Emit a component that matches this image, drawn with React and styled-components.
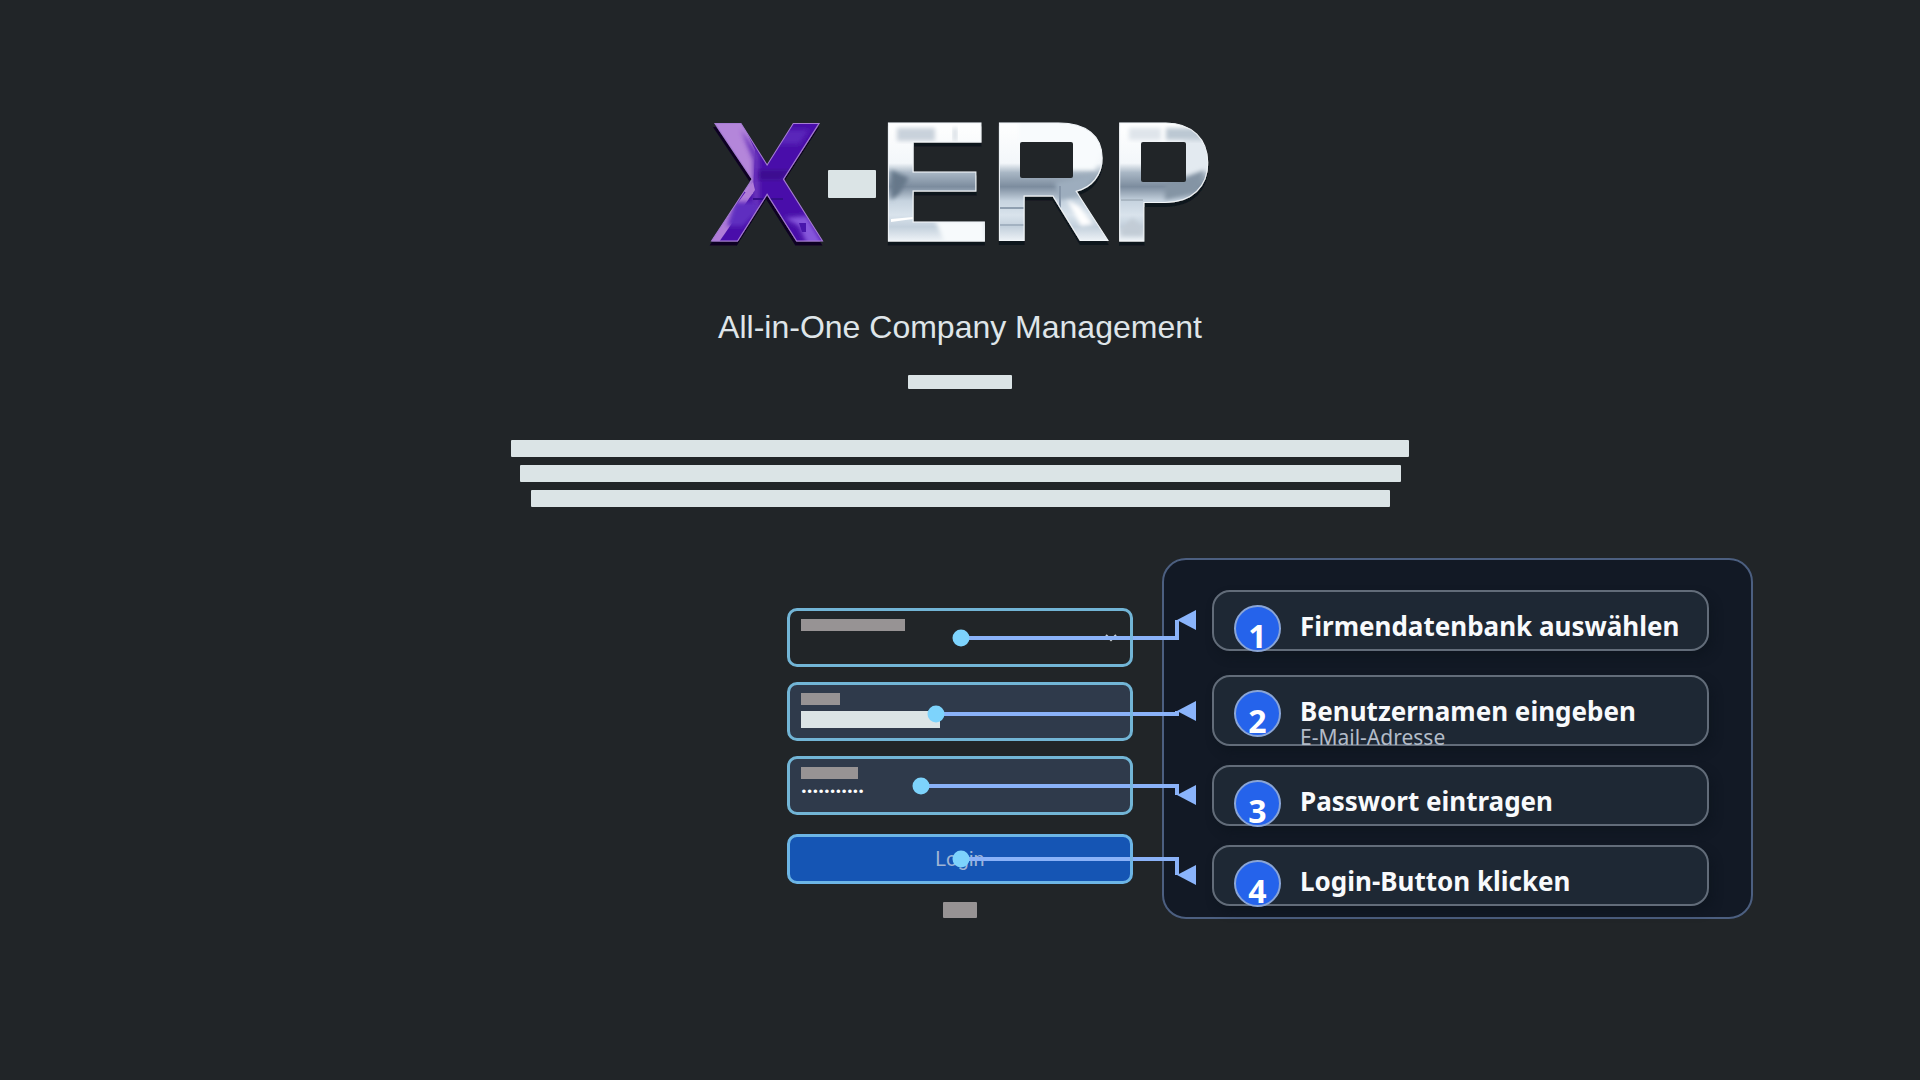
import React from "react";
import styled, { createGlobalStyle } from "styled-components";

const GlobalStyle = createGlobalStyle`
  *, *::before, *::after { box-sizing: border-box; }
  body {
    margin: 0;
    background: #212528;
    color: #dfe5e9;
    font-family: "Liberation Sans", Arial, sans-serif;
  }
`;

const Page = styled.main`
  min-height: 100vh;
  padding: 120px 0 40px;
  background: #212528;
`;

const Intro = styled.header`
  display: flex;
  flex-direction: column;
  align-items: center;
`;

const LogoHeading = styled.h1`
  margin: 0;
  line-height: 0;
`;

const LogoSvg = styled.svg`
  overflow: visible;
`;

const LogoLetter = styled.text`
  font-family: ${(p) => (p.$narrow ? "Inter" : '"Liberation Sans", Arial')}, sans-serif;
  font-size: ${(p) => (p.$narrow ? 162 : 171)}px;
  font-weight: 700;
`;

const Tagline = styled.p`
  margin: 59px 0 0;
  font-size: 32px;
  line-height: 40px;
  color: #dfe5e9;
`;

const Bar = styled.span`
  display: block;
  width: ${(p) => p.$width}px;
  max-width: 100%;
  height: ${(p) => p.$height}px;
  border-radius: 1px;
  background: ${(p) => (p.$muted ? "#979394" : "#dbe4e6")};
`;

const Version = styled.div`
  margin-top: 28px;
`;

const Description = styled.div`
  display: flex;
  flex-direction: column;
  align-items: center;
  gap: 8px;
  margin-top: 51px;
`;

const Stage = styled.section`
  display: grid;
  grid-template-columns: 1fr 346px 1fr;
  align-items: start;
  margin-top: 51px;
`;

const FormColumn = styled.div`
  position: relative;
  z-index: 1;
  grid-column: 2;
  padding-top: 50px;
`;

const Form = styled.form`
  display: flex;
  flex-direction: column;
  align-items: stretch;
  gap: 15px;
`;

const Field = styled.div`
  display: flex;
  flex-direction: column;
  align-items: flex-start;
  gap: 6px;
  height: 59px;
  padding: 8px 11px;
  border: 3px solid #72b5d6;
  border-radius: 10px;
  background: ${(p) => (p.$filled ? "#2f3a4b" : "transparent")};
`;

const FieldLabel = styled.label`
  display: block;
  width: ${(p) => p.$width}px;
  height: 12px;
  flex-shrink: 0;
  background: #979394;
`;

const SelectRow = styled.div`
  display: flex;
  align-items: center;
  align-self: stretch;
  height: 12px;
  margin-top: -5px;
  padding-right: 2px;
`;

const Select = styled.select`
  flex: 1;
  height: 12px;
  padding: 0;
  border: 0;
  outline: 0;
  appearance: none;
  background: transparent;
  color: #dfe5e9;
`;

const UserInput = styled.input`
  width: 139px;
  height: 17px;
  padding: 0;
  border: 0;
  outline: 0;
  background: #dbe4e6;
`;

const PasswordInput = styled.input`
  width: 100%;
  height: 12px;
  padding: 0;
  border: 0;
  outline: 0;
  background: transparent;
  color: #ffffff;
  font-family: Roboto, sans-serif;
  font-size: 17px;
  line-height: 12px;
`;

const LoginButton = styled.button`
  height: 50px;
  margin-top: 4px;
  padding: 0;
  border: 3px solid #6cb5e6;
  border-radius: 10px;
  background: #1555b4;
  color: #9fb4d4;
  font-family: Roboto, sans-serif;
  font-size: 20px;
`;

const FormFooter = styled.div`
  display: flex;
  justify-content: center;
  margin-top: 18px;
`;

const Connectors = styled.svg`
  position: absolute;
  top: 0;
  left: 0;
  overflow: visible;
  pointer-events: none;
`;

const Panel = styled.ol`
  grid-column: 3;
  display: flex;
  flex-direction: column;
  gap: 19px;
  width: 75%;
  min-width: 591px;
  margin: 0 0 0 29px;
  padding: 30px 42px 11px 48px;
  border: 2px solid #4c5f80;
  border-radius: 24px;
  background: #121925;
  list-style: none;
`;

const Step = styled.li`
  display: flex;
  align-items: flex-start;
  gap: 19px;
  height: ${(p) => (p.$tall ? 71 : 61)}px;
  margin-top: ${(p) => (p.$tall ? 5 : 0)}px;
  padding: 13px 20px 0;
  border: 2px solid #626c79;
  border-radius: 18px;
  background: #1e2834;
  box-shadow: 4px 6px 10px rgba(12, 20, 28, 0.5);
`;

const StepNumber = styled.span`
  display: flex;
  flex-shrink: 0;
  justify-content: center;
  width: 47px;
  height: 47px;
  padding-top: 7px;
  border: 2px solid #8aa5d6;
  border-radius: 50%;
  background: #2563eb;
  color: #ffffff;
  font-family: "Noto Sans", sans-serif;
  font-size: 32px;
  font-weight: 700;
  line-height: 44px;
`;

const StepText = styled.div`
  display: flex;
  flex-direction: column;
  padding-top: 3px;
  font-family: "Noto Sans", sans-serif;
  white-space: nowrap;
`;

const StepTitle = styled.span`
  font-size: 26px;
  font-weight: 700;
  line-height: 36px;
  color: #f8fafc;
`;

const StepNote = styled.span`
  font-size: 21px;
  line-height: 16px;
  color: #b3bcc8;
`;

/* Each letter is one text filled with its own painted surface. */
function Surface({ id, base, children }) {
  return (
    <pattern id={id} patternUnits="userSpaceOnUse" x="-10" y="-10" width="540" height="150" viewBox="-10 -10 540 150">
      <rect x="-10" y="-10" width="540" height="150" fill={base} />
      {children}
    </pattern>
  );
}

function Logo() {
  return (
    <LogoSvg width="502" height="128" viewBox="0 0 502 128" role="img" aria-label="X-ERP">
      <defs>
        <linearGradient id="chrome" gradientUnits="userSpaceOnUse" x1="0" y1="3" x2="0" y2="121">
          <stop offset="0" stopColor="#ffffff" />
          <stop offset="0.34" stopColor="#f3f7fa" />
          <stop offset="0.42" stopColor="#a9b7c5" />
          <stop offset="0.54" stopColor="#7c8c9e" />
          <stop offset="0.66" stopColor="#c6d3df" />
          <stop offset="0.78" stopColor="#d9e3ec" />
          <stop offset="0.88" stopColor="#c3d0dc" />
          <stop offset="1" stopColor="#eef3f7" />
        </linearGradient>
        <filter id="soft" x="-20%" y="-20%" width="140%" height="140%">
          <feGaussianBlur stdDeviation="2" />
        </filter>
        <filter id="violetEdge" x="-10%" y="-10%" width="120%" height="120%">
          <feDropShadow dx="-1" dy="4" stdDeviation="0.4" floodColor="#0b0620" floodOpacity="1" />
        </filter>
        <filter id="chromeEdge" x="-10%" y="-10%" width="120%" height="120%">
          <feDropShadow dx="0" dy="4" stdDeviation="0.6" floodColor="#0e141a" floodOpacity="1" />
        </filter>

        <Surface id="fillX" base="#4a11aa">
          <path d="M0 0H32L46 30L44 74L20 68Z" fill="#b486da" />
          <path d="M32 10L50 34V98L44 98V40Z" fill="#6c34bc" filter="url(#soft)" />
          <path d="M0 122L44 62L46 70L10 122Z" fill="#b07cd8" />
          <path d="M50 50H84L72 60H50Z" fill="#3c0b90" filter="url(#soft)" />
          <path d="M72 10H100L90 24H68Z" fill="#5a28ba" filter="url(#soft)" />
          <path d="M26 82H48V92L34 106H18Z" fill="#5f2ec0" filter="url(#soft)" />
          <path d="M44 78H74V80H44Z" fill="#34088a" />
          <path d="M76 98L98 96L114 124H98L90 106Z" fill="#8656dc" filter="url(#soft)" />
          <path d="M90 103H97V112H93Z" fill="#4a14ac" />
        </Surface>
        <Surface id="fillE" base="url(#chrome)">
          <path d="M188 8H226V21H188Z" fill="#c9d2db" filter="url(#soft)" />
          <path d="M244 8H248V21H244Z" fill="#d3dae1" filter="url(#soft)" />
          <path d="M182 50L200 58L190 74L182 80Z" fill="#66788a" filter="url(#soft)" />
          <path d="M182 99L204 97V99L182 102Z" fill="#ffffff" />
          <path d="M226 100H276V124H236Z" fill="#f7fafc" filter="url(#soft)" />
        </Surface>
        <Surface id="fillR" base="url(#chrome)">
          <path d="M310 0H376L392 30L386 50H360V24H310Z" fill="#f8fbfd" filter="url(#soft)" />
          <path d="M346 62L386 54L376 74L350 80Z" fill="#9dadbe" filter="url(#soft)" />
          <path d="M358 80L370 86L384 104L372 106Z" fill="#ffffff" filter="url(#soft)" />
          <path d="M291 87H316V89H291Z" fill="#8f9fb0" />
          <path d="M291 104H316V106H291Z" fill="#a3b2c1" />
          <path d="M350 66H352V92H350Z" fill="#8797aa" />
        </Surface>
        <Surface id="fillP" base="url(#chrome)">
          <path d="M456 22L504 14V50L474 62V20Z" fill="#e3eaf0" filter="url(#soft)" />
          <path d="M457 8H488L498 20H457Z" fill="#bcc8d3" filter="url(#soft)" />
          <path d="M420 8H452V20H420Z" fill="#dfe5eb" filter="url(#soft)" />
          <path d="M456 64L496 50L488 72L456 80Z" fill="#8494a4" filter="url(#soft)" />
          <path d="M412 79H434V81H412Z" fill="#a9b6c2" />
          <path d="M412 108L424 98L434 108V116H412Z" fill="#c2ccd6" filter="url(#soft)" />
        </Surface>
      </defs>

      <LogoLetter x="1" y="121" fill="url(#fillX)" stroke="#a67cd4" filter="url(#violetEdge)">
        X
      </LogoLetter>
      <rect x="119" y="50" width="48" height="28" rx="1" fill="#dbe4e6" />
      <LogoLetter x="168" y="121" fill="url(#fillE)" stroke="#f1f5f8" filter="url(#chromeEdge)">
        E
      </LogoLetter>
      <LogoLetter x="279" y="121" fill="url(#fillR)" stroke="#f1f5f8" filter="url(#chromeEdge)">
        R
      </LogoLetter>
      <LogoLetter x="400" y="121" $narrow fill="url(#fillP)" stroke="#f1f5f8" filter="url(#chromeEdge)">
        P
      </LogoLetter>
      <rect x="309" y="18" width="66" height="44" fill="url(#fillR)" />
      <rect x="430" y="18" width="54" height="46" fill="url(#fillP)" />
      <rect x="311" y="22" width="53" height="36" rx="2" fill="#212528" />
      <rect x="432" y="22" width="45" height="40" rx="2" fill="#212528" />
    </LogoSvg>
  );
}

/* Coordinates start at the top left corner of the form column. */
const LINKS = [
  { x: 174, y: 80, tip: 62 },
  { x: 149, y: 156, tip: 153 },
  { x: 134, y: 228, tip: 237 },
  { x: 174, y: 301, tip: 317 },
];

const STEPS = [
  { title: "Firmendatenbank auswählen" },
  { title: "Benutzernamen eingeben", note: "E-Mail-Adresse" },
  { title: "Passwort eintragen" },
  { title: "Login-Button klicken" },
];

export default function App() {
  return (
    <Page>
      <GlobalStyle />
      <Intro>
        <LogoHeading>
          <Logo />
        </LogoHeading>
        <Tagline>All-in-One Company Management</Tagline>
        <Version>
          <Bar $width={104} $height={14} />
        </Version>
        <Description>
          <Bar $width={898} $height={17} />
          <Bar $width={881} $height={17} />
          <Bar $width={859} $height={17} />
        </Description>
      </Intro>

      <Stage>
        <FormColumn>
          <Form onSubmit={(e) => e.preventDefault()}>
            <Field>
              <FieldLabel htmlFor="database" $width={104} />
              <SelectRow>
                <Select id="database" aria-label="Firmendatenbank" />
                <svg width="12" height="8" viewBox="0 0 12 8" aria-hidden="true">
                  <path d="M1 1L6 6L11 1" fill="none" stroke="#c9cfd3" strokeWidth="2" />
                </svg>
              </SelectRow>
            </Field>
            <Field $filled>
              <FieldLabel htmlFor="user" $width={39} />
              <UserInput id="user" type="text" aria-label="Benutzername" />
            </Field>
            <Field $filled>
              <FieldLabel htmlFor="password" $width={57} />
              <PasswordInput
                id="password"
                type="password"
                aria-label="Passwort"
                defaultValue="***********"
              />
            </Field>
            <LoginButton type="submit">Login</LoginButton>
          </Form>
          <FormFooter>
            <Bar $width={34} $height={16} $muted />
          </FormFooter>
          <Connectors width="410" height="361" viewBox="0 0 410 361" aria-hidden="true">
            {LINKS.map((l) => (
              <g key={l.y}>
                <path
                  d={`M${l.x} ${l.y}H390V${l.tip}`}
                  fill="none"
                  stroke="#8ab2f8"
                  strokeWidth="4"
                />
                <path d={`M390 ${l.tip}L409 ${l.tip - 10}V${l.tip + 10}Z`} fill="#8ab4fb" />
                <path d={`M344.5 ${l.y - 2}v4`} stroke="#78b6e2" strokeWidth="3" />
                <circle cx={l.x} cy={l.y} r="8.5" fill="#7dd3fc" />
              </g>
            ))}
          </Connectors>
        </FormColumn>

        <Panel>
          {STEPS.map((s, i) => (
            <Step key={s.title} $tall={Boolean(s.note)}>
              <StepNumber>{i + 1}</StepNumber>
              <StepText>
                <StepTitle>{s.title}</StepTitle>
                {s.note && <StepNote>{s.note}</StepNote>}
              </StepText>
            </Step>
          ))}
        </Panel>
      </Stage>
    </Page>
  );
}
